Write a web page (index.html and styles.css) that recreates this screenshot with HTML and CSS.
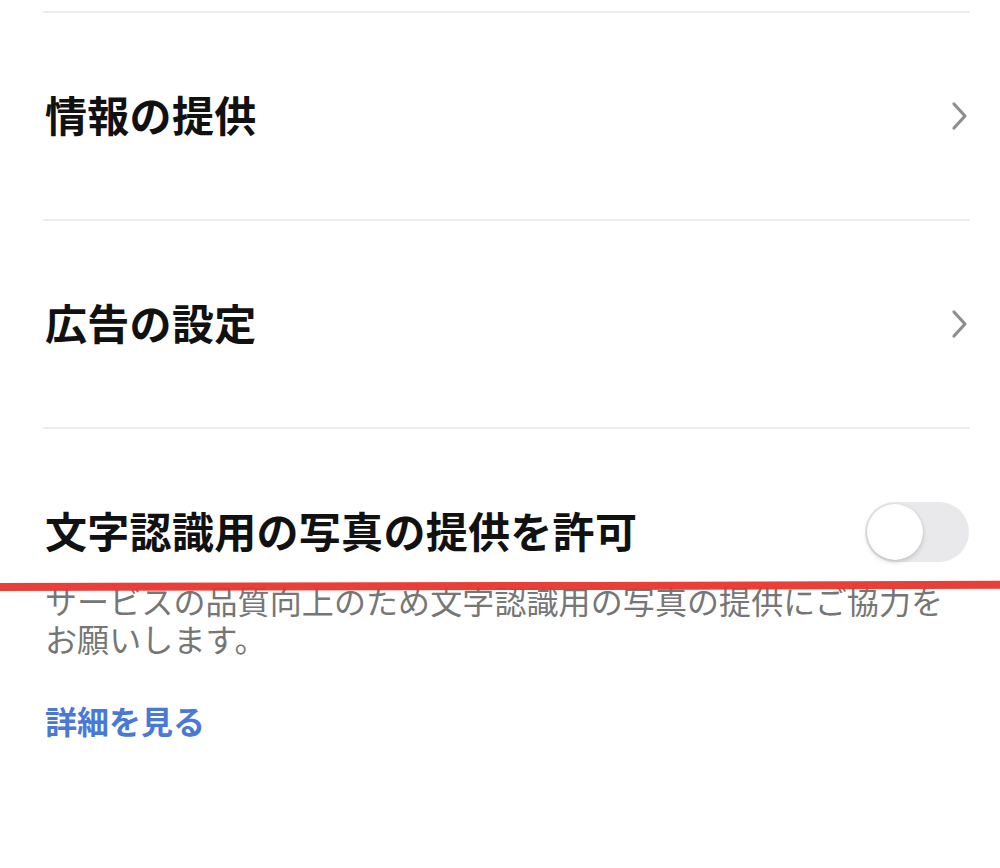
FILE: index.html
```html
<!DOCTYPE html>
<html lang="ja">
<head>
<meta charset="utf-8">
<link rel="stylesheet" href="styles.css">
</head>
<body>
<div class="page">
  <div class="list">
    <div class="row">
      <span class="row-title">情報の提供</span>
      <svg class="chevron" width="20" height="30" viewBox="0 0 20 30"><path d="M4 3 L15 15 L4 27" fill="none" stroke="#8e8e93" stroke-width="3.2" stroke-linecap="round" stroke-linejoin="round"/></svg>
    </div>
    <div class="row">
      <span class="row-title">広告の設定</span>
      <svg class="chevron" width="20" height="30" viewBox="0 0 20 30"><path d="M4 3 L15 15 L4 27" fill="none" stroke="#8e8e93" stroke-width="3.2" stroke-linecap="round" stroke-linejoin="round"/></svg>
    </div>
    <div class="toggle-section">
      <div class="toggle-row">
        <span class="row-title">文字認識用の写真の提供を許可</span>
        <span class="switch"><span class="knob"></span></span>
      </div>
      <p class="desc">サービスの品質向上のため文字認識用の写真の提供にご協力を<br>お願いします。</p>
      <a class="link" href="#">詳細を見る</a>
    </div>
  </div>
  <svg class="annotation" width="1000" height="20" viewBox="0 0 1000 20">
    <path d="M0 10 C 200 9.5, 400 8.8, 600 9 S 900 8.2, 1000 7.8" fill="none" stroke="#e8352d" stroke-width="8" stroke-linecap="round" opacity="0.95"/>
  </svg>
</div>
</body>
</html>
```

FILE: styles.css
```css
html, body {
  margin: 0;
  padding: 0;
  background: #ffffff;
}
.page {
  position: relative;
  width: 1000px;
  height: 868px;
  overflow: hidden;
  font-family: "Noto Sans CJK JP", "Noto Sans", sans-serif;
}
.list {
  margin-left: 43px;
  width: 927px;
  padding-top: 11px;
}
.row {
  height: 206px;
  border-top: 2px solid #ececee;
  display: flex;
  align-items: center;
  justify-content: space-between;
}
.row-title {
  font-size: 42px;
  font-weight: 700;
  color: #111111;
  letter-spacing: 0.3px;
  padding-left: 2px;
  padding-bottom: 6px;
}
.toggle-section {
  border-top: 2px solid #ececee;
  padding-top: 73px;
}
.toggle-row {
  height: 60px;
  display: flex;
  align-items: center;
  justify-content: space-between;
}
.switch {
  width: 104px;
  height: 60px;
  border-radius: 30px;
  background: #e9e9eb;
  display: flex;
  align-items: center;
  padding-left: 2px;
  box-sizing: border-box;
  margin-right: 1px;
}
.knob {
  width: 56px;
  height: 56px;
  border-radius: 50%;
  background: #ffffff;
  box-shadow: 0 2px 5px rgba(0,0,0,0.18), 0 0 1px rgba(0,0,0,0.1);
}
.desc {
  margin: 19px 0 0 0;
  font-size: 32px;
  line-height: 38px;
  color: #767676;
  padding-left: 2px;
  letter-spacing: 0.1px;
}
.link {
  display: block;
  margin-top: 44px;
  font-size: 32px;
  line-height: 38px;
  font-weight: 600;
  color: #4a78d6;
  text-decoration: none;
  padding-left: 2px;
}
.annotation {
  position: absolute;
  left: 0;
  top: 577px;
}
```
